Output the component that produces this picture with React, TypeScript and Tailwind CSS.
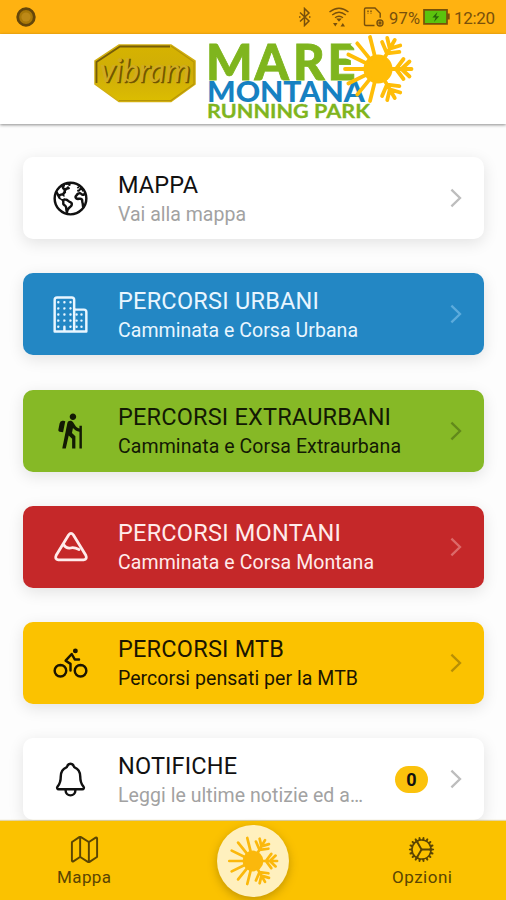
import type { ReactNode } from "react";
import {
   IoBicycleOutline,
   IoBusinessOutline,
   IoCogOutline,
   IoEarthOutline,
   IoMapOutline,
   IoNotificationsOutline,
} from "react-icons/io5";
import { MdHiking } from "react-icons/md";

type Item = {
   title: string;
   text: string;
   icon: ReactNode;
   card: string;
   sub: string;
   arrow: string;
   titleWidth: number;
   textWidth: number;
   badge?: string;
};

const items: Item[] = [
   {
      title: "MAPPA",
      text: "Vai alla mappa",
      icon: <IoEarthOutline size={39} />,
      card: "bg-white text-[#111]",
      sub: "text-[#a2a2a2]",
      arrow: "text-[#bdbdbd]",
      titleWidth: 80,
      textWidth: 128,
   },
   {
      title: "PERCORSI URBANI",
      text: "Camminata e Corsa Urbana",
      icon: <IoBusinessOutline size={39} />,
      card: "bg-[#2387c4] text-[#e9f6ff]",
      sub: "text-[#e9f6ff]",
      arrow: "text-[#5cabdc]",
      titleWidth: 201,
      textWidth: 240,
   },
   {
      title: "PERCORSI EXTRAURBANI",
      text: "Camminata e Corsa Extraurbana",
      icon: <MdHiking size={39} />,
      card: "bg-[#86b926] text-[#131a04]",
      sub: "text-[#131a04]",
      arrow: "text-[#62891b]",
      titleWidth: 273,
      textWidth: 283,
   },
   {
      title: "PERCORSI MONTANI",
      text: "Camminata e Corsa Montana",
      icon: <MountainIcon />,
      card: "bg-[#c52829] text-[#ffebeb]",
      sub: "text-[#ffebeb]",
      arrow: "text-[#dc6a69]",
      titleWidth: 223,
      textWidth: 256,
   },
   {
      title: "PERCORSI MTB",
      text: "Percorsi pensati per la MTB",
      icon: <IoBicycleOutline size={39} />,
      card: "bg-[#fbc200] text-[#1b1500]",
      sub: "text-[#1b1500]",
      arrow: "text-[#b88f05]",
      titleWidth: 166,
      textWidth: 240,
   },
   {
      title: "NOTIFICHE",
      text: "Leggi le ultime notizie ed a…",
      icon: <IoNotificationsOutline size={39} />,
      card: "bg-white text-[#111]",
      sub: "text-[#a2a2a2]",
      arrow: "text-[#bdbdbd]",
      titleWidth: 119,
      textWidth: 245,
      badge: "0",
   },
];

function MountainIcon() {
   return (
      <svg width="36" height="36" viewBox="0 0 36 36" fill="none" stroke="currentColor" strokeWidth="2.8" strokeLinejoin="round" strokeLinecap="round">
         <path d="M15.6 6 3.2 26.2Q1.4 30.3 5.4 30.8H30.6Q34.6 30.3 32.8 26.2L20.4 6Q18 2.7 15.6 6Z" />
         <path d="M10.5 15.5Q13.5 20 17.500 19Q21 18 26 20.500" />
      </svg>
   );
}

function Chevron({ className }: { className: string }) {
   return (
      <svg width="12" height="20" viewBox="0 0 12 20" className={className} fill="none" stroke="currentColor" strokeWidth="2.3">
         <path d="m1.4 1.6 8.6 8.4-8.6 8.4" />
      </svg>
   );
}

const rays = [104, 129, 154, 180, 206, 231, 256];

// Drawn around 0,0: half sun on the left, half snowflake on the right
function SunFlake() {
   return (
      <g stroke="currentColor" strokeWidth="3.8" strokeLinecap="round" fill="none">
         <circle r="14.5" fill="currentColor" stroke="none" />
         {rays.map((a) => (
            <path key={a} d="M12 0H33" transform={`rotate(${a})`} />
         ))}
         {[-60, 0, 60].map((a) => (
            <path
               key={a}
               d="M12 0H33.5M18 0 25.5 -10M18 0 25.5 10M23.5 0 31.5 -7.5M23.5 0 31.5 7.5"
               transform={`rotate(${a})`}
            />
         ))}
      </g>
   );
}

function StatusBar() {
   return (
      <div className="flex h-[34px] shrink-0 items-center bg-[#ffb211] pr-[10px] pl-4 text-[#79500b]">
         <svg width="20" height="20" viewBox="0 0 20 20">
            <circle cx="10" cy="10" r="8.3" fill="#a97908" stroke="#65460a" strokeWidth="2.8" />
            <circle cx="10" cy="10" r="4.6" fill="#bd8917" />
         </svg>
         <svg className="ml-auto" width="14" height="20" viewBox="0 0 14 20" fill="none" stroke="currentColor" strokeWidth="1.5">
            <path d="m3 5.5 9 8.5-4.5 4.5V1.5L12 6l-9 8.5" />
            <path d="M2 10h1.5M12 10h1.5" />
         </svg>
         <svg className="ml-[17px]" width="22" height="22" viewBox="0 0 22 22" fill="none" stroke="currentColor" strokeWidth="1.4">
            <path d="M1.5 6Q11 -1.5 20.5 6M4.2 9Q11 3.5 17.8 9M7 11.8Q11 8.7 15 11.8" />
            <path d="m8.2 12.5 2.8 3.2 2.8-3.2ZM5 17h4.5l-2.2 3.4ZM12.5 20.5h4.500l-2.200-3.500Z" fill="currentColor" stroke="none" />
         </svg>
         <svg className="ml-[13px]" width="22" height="22" viewBox="0 0 22 22" fill="none" stroke="currentColor" strokeWidth="1.4">
            <path d="M11.5 19.5H2.8Q1.5 19.5 1.5 18V3.2Q1.5 2 2.8 2H12l5.2 5.2v4.5" />
            <path d="M5 4.5v3M8 4.5v3" strokeDasharray="1.4 .8" />
            <circle cx="17" cy="17" r="3" />
            <circle cx="17" cy="17" r="1" />
         </svg>
         <Label text="97%" width={31} className="ml-[4px] h-5 w-[32px] translate-y-[1px] text-[16.5px]" />
         <svg className="ml-[2px]" width="28" height="18" viewBox="0 0 28 18">
            <path d="M1 1.8h23v14H1Z" fill="#5bc30d" stroke="#785108" strokeWidth="1.7" />
            <path d="M24 5.5h2.7v6H24Z" fill="#785108" />
            <path d="m14.4 4-5 5.4h3.2L11 14l5.2-5.8H13Z" fill="#28630b" />
         </svg>
         <Label text="12:20" width={41} className="ml-[3px] h-5 w-[42px] translate-y-[1px] text-[17px]" />
      </div>
   );
}

// Single line of text kept at a fixed advance width
function Label({ text, width, className }: { text: string; width: number; className: string }) {
   return (
      <svg className={`block shrink-0 overflow-visible ${className}`}>
         <text x="0" y="16" textLength={width} lengthAdjust="spacing" fill="currentColor">
            {text}
         </text>
      </svg>
   );
}

function Logo() {
   return (
      <svg width="506" height="90" viewBox="0 34 506 90" className="block overflow-visible">
         <defs>
            <linearGradient id="gold" x1="0" y1="0" x2="0" y2="1">
               <stop offset="0" stopColor="#d6b300" />
               <stop offset=".5" stopColor="#cfad08" />
               <stop offset="1" stopColor="#dcbd00" />
            </linearGradient>
         </defs>
         <path d="M119 45H171L195 61V84L171 101.5H119L95 84V61Z" fill="url(#gold)" stroke="#d2af10" strokeWidth="1.5" />
         <path d="M96.500 83V62L120 46.500H170" fill="none" stroke="#765d08" strokeWidth="1.8" />
         <path d="M171 46 194 62V84L171 100.5H119" fill="none" stroke="#b59508" strokeWidth="1.2" />
         <g fontFamily="Lato" fontStyle="italic" fontSize="32">
            <text x="101.5" y="83" textLength="90" lengthAdjust="spacingAndGlyphs" fill="#705500" stroke="#705500" strokeWidth=".6">vibram</text>
            <text x="100" y="81.5" textLength="90" lengthAdjust="spacingAndGlyphs" fill="#d0ac20">vibram</text>
         </g>
         <g fontFamily="Lato" fontWeight="900">
            <text x="206 254.5 293 327.5" y="80" fontSize="49" fill="#7fb51e" stroke="#7fb51e" strokeWidth=".8">MARE</text>
            <text x="207" y="102" fontSize="27.5" textLength="158" lengthAdjust="spacingAndGlyphs" fill="#1681c2">MONTANA</text>
            <text x="207" y="118" fontSize="19.5" fontWeight="700" textLength="163" lengthAdjust="spacingAndGlyphs" fill="#7fb51e" stroke="#7fb51e" strokeWidth=".3">RUNNING PARK</text>
         </g>
         <g transform="translate(378 69)">
            <path d="M-33 -15.5-14 -7M-25 -27-10 -13M-34 0H-14" stroke="#fff" strokeWidth="7.5" />
            <g className="text-[#ffbd08]">
               <SunFlake />
            </g>
         </g>
      </svg>
   );
}

function Card({ item }: { item: Item }) {
   return (
      <div className={`flex h-[82px] shrink-0 items-center rounded-[10px] pr-[22px] shadow-[0_4px_16px_rgba(0,0,0,0.11)] ${item.card}`}>
         <div className="flex w-[95px] shrink-0 justify-center">{item.icon}</div>
         <div className="flex flex-1 flex-col gap-[7px]">
            <Label text={item.title} width={item.titleWidth} className="h-[21px] w-full translate-y-[3px] text-[23.5px]" />
            <Label text={item.text} width={item.textWidth} className={`h-[21px] w-full translate-y-[3px] text-[19.5px] ${item.sub}`} />
         </div>
         {item.badge && (
            <span className="mr-[22px] flex h-[27px] w-[33px] shrink-0 items-center justify-center rounded-full bg-[#fbc20c] text-[18px] font-bold">
               {item.badge}
            </span>
         )}
         <Chevron className={`shrink-0 ${item.arrow}`} />
      </div>
   );
}

export default function App() {
   return (
      <main className="flex h-[900px] w-[506px] flex-col overflow-hidden bg-[#fdfdfd] font-['Roboto',sans-serif]">
         <StatusBar />
         <header className="z-10 h-[90px] shrink-0 bg-white shadow-[0_1px_3px_rgba(0,0,0,0.45)]">
            <Logo />
         </header>

         <section className="flex min-h-0 flex-1 flex-col gap-[34.2px] overflow-hidden pt-[33.2px] pr-[22px] pl-[23px]">
            {items.map((item) => (
               <Card key={item.title} item={item} />
            ))}
         </section>

         <nav className="z-10 grid h-[79px] shrink-0 grid-cols-3 bg-[#fbc200] text-[#5a4503] shadow-[0_-1px_1px_rgba(180,140,0,0.35)]">
            <div className="flex flex-col items-center gap-[2px] pt-[13px]">
               <IoMapOutline size={31} />
               <Label text="Mappa" width={54} className="h-5 w-[54px] text-[17px]" />
            </div>
            <div className="flex items-center justify-center">
               <div className="flex size-[72px] items-center justify-center rounded-full bg-[#fff0be] text-[#fbb80c] shadow-[0_3px_10px_rgba(110,80,0,0.4)]">
                  <svg width="56" height="56" viewBox="-39 -39 78 78">
                     <SunFlake />
                  </svg>
               </div>
            </div>
            <div className="flex flex-col items-center gap-[2px] pt-[13px]">
               <IoCogOutline size={31} />
               <Label text="Opzioni" width={60} className="h-5 w-[60px] text-[17px]" />
            </div>
         </nav>
      </main>
   );
}
